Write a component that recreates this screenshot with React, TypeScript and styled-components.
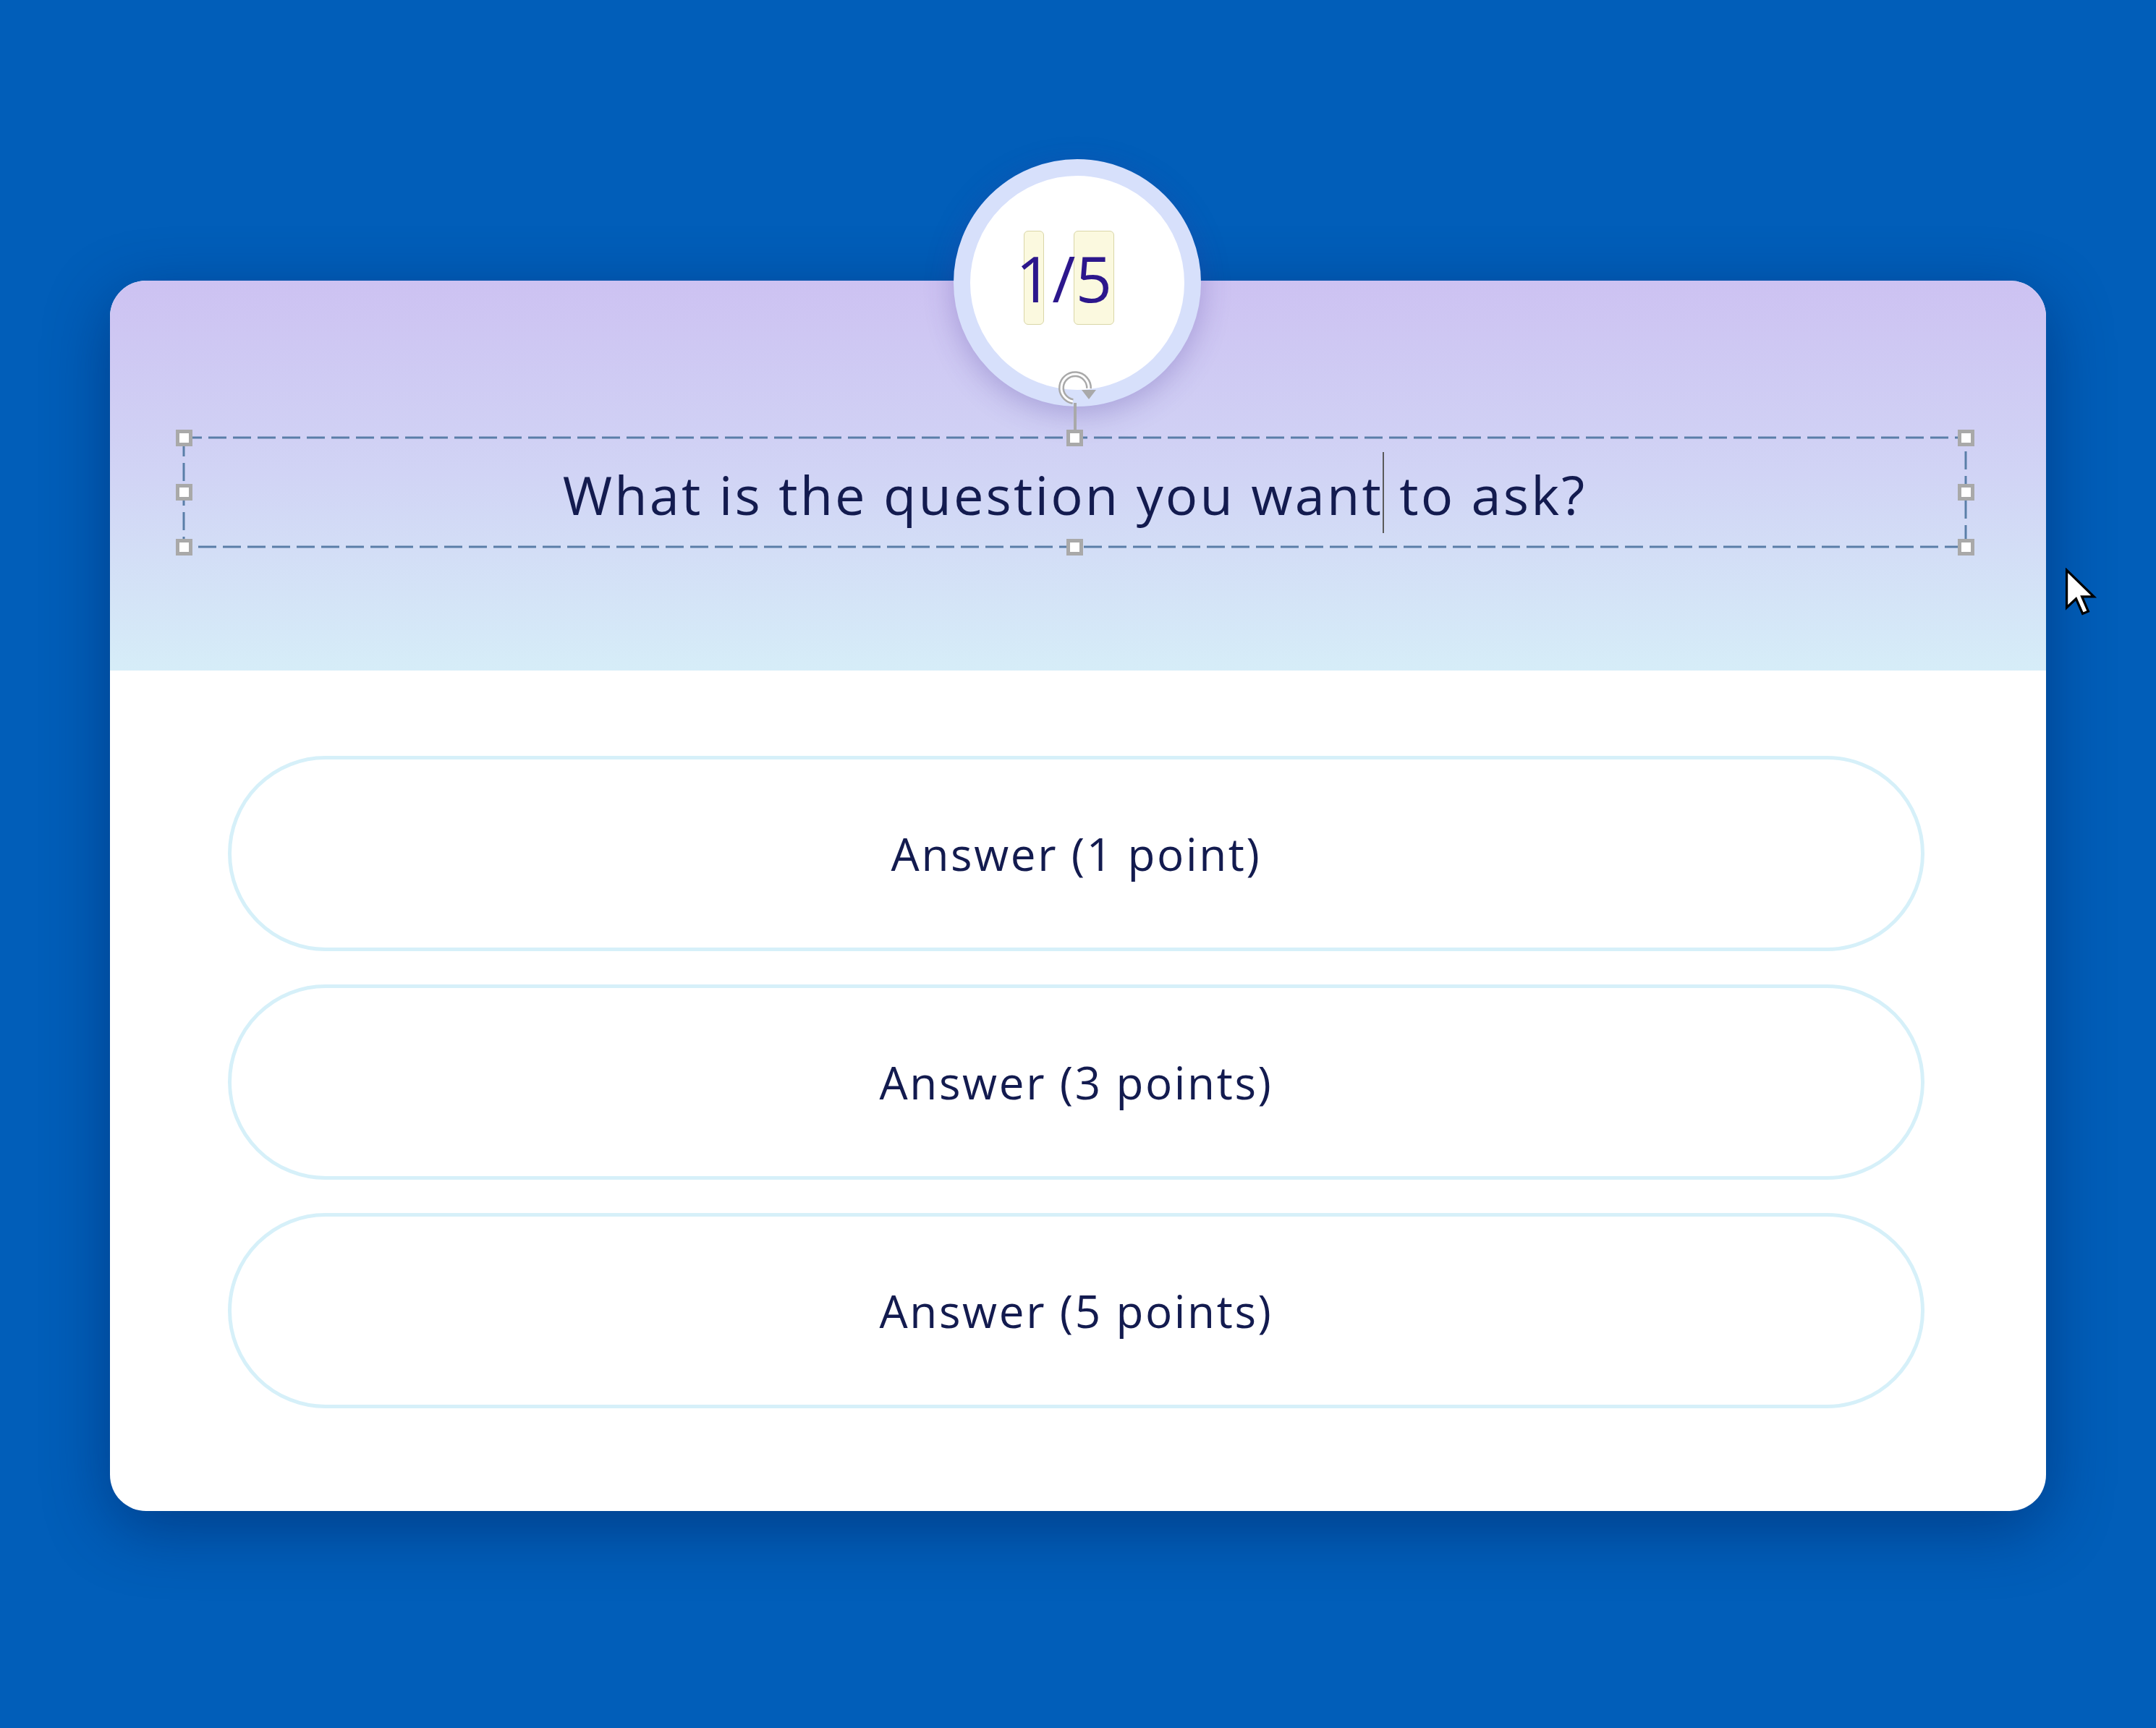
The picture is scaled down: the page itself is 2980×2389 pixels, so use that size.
import React from "react";
import styled, { createGlobalStyle } from "styled-components";

const Global = createGlobalStyle`
  html, body { margin: 0; padding: 0; }
  body {
    width: 2980px;
    height: 2389px;
    overflow: hidden;
    background: #015eb9;
    font-family: "Open Sans", "Noto Sans", sans-serif;
  }
`;

const Page = styled.div`
  position: relative;
  width: 2980px;
  height: 2389px;
  box-sizing: border-box;
  padding: 388px 0 0 152px;
  background: #015eb9;
`;

const Card = styled.div`
  position: relative;
  width: 2676px;
  height: 1701px;
  border-radius: 50px;
  background: #ffffff;
  box-shadow: 0 24px 90px rgba(0, 25, 80, 0.45);
  display: flex;
  flex-direction: column;
`;

const Header = styled.div`
  height: 539px;
  box-sizing: border-box;
  padding: 217px 0 0 102px;
  border-radius: 50px 50px 0 0;
  background: linear-gradient(180deg, #cdc2f2 0%, #d1d4f5 50%, #d6edf8 100%);
  display: flex;
  align-items: flex-start;
`;

const Badge = styled.div`
  position: absolute;
  top: -168px;
  left: 50%;
  margin-left: -172px;
  width: 342px;
  height: 342px;
  box-sizing: border-box;
  border-radius: 50%;
  border: 23px solid #d7e0fb;
  background: #ffffff;
  box-shadow: 0 10px 40px rgba(70, 50, 150, 0.28);
  display: flex;
  align-items: center;
  justify-content: center;
  z-index: 2;
`;

const Counter = styled.div`
  position: relative;
  height: 130px;
  line-height: 130px;
  margin: 0 37px 14px 0;
  font-size: 88px;
  color: #2c178c;
  white-space: nowrap;

  &::before,
  &::after {
    content: "";
    position: absolute;
    top: 0;
    bottom: 0;
    box-sizing: border-box;
    border-radius: 6px;
    background: #fbf9df;
    border: 1.5px solid #d9d6a8;
    z-index: -1;
  }
  &::before {
    left: 11px;
    width: 28px;
  }
  &::after {
    left: 80px;
    width: 56px;
  }
`;

const CounterText = styled.span`
  position: relative;
`;

const SelectionBox = styled.div`
  position: relative;
  width: 2463px;
  height: 151px;
  display: flex;
  align-items: center;
  justify-content: center;
`;

const DashFrame = styled.svg`
  position: absolute;
  inset: 0;
  width: 100%;
  height: 100%;
  overflow: visible;
  pointer-events: none;
`;

const Handle = styled.span<{ $x: number; $y: number }>`
  position: absolute;
  left: ${(p) => p.$x * 100}%;
  top: ${(p) => p.$y * 100}%;
  width: 23px;
  height: 23px;
  margin: -11.5px 0 0 -11.5px;
  box-sizing: border-box;
  background: #ffffff;
  border: 5px solid #a9a9a9;
  z-index: 3;
`;

const Rotator = styled.svg`
  position: absolute;
  left: 50%;
  bottom: 100%;
  width: 60px;
  height: 90px;
  margin-left: -30px;
  z-index: 3;
  overflow: visible;
`;

const Question = styled.div`
  font-size: 74px;
  font-weight: 500;
  letter-spacing: 3.1px;
  line-height: 1;
  color: #131b4f;
  white-space: nowrap;
`;

const Caret = styled.span`
  display: inline-block;
  width: 2px;
  height: 112px;
  margin: 0 -1px;
  vertical-align: -25px;
  background: #5a5a5a;
`;

const Body = styled.div`
  flex: 1;
  padding: 118px 0 0 163px;
  display: flex;
  flex-direction: column;
  gap: 46px;
`;

const AnswerPill = styled.div`
  width: 2345px;
  height: 270px;
  box-sizing: border-box;
  border: 5px solid #d6f0f9;
  border-radius: 135px;
  background: #ffffff;
  display: flex;
  align-items: center;
  justify-content: center;
  font-size: 62px;
  font-weight: 500;
  letter-spacing: 2.6px;
  color: #131b4f;
`;

const Pointer = styled.svg`
  position: absolute;
  left: 2853px;
  top: 785px;
  width: 46px;
  height: 68px;
`;

const handles: Array<[number, number]> = [
  [0, 0], [0.5, 0], [1, 0],
  [0, 0.5], [1, 0.5],
  [0, 1], [0.5, 1], [1, 1],
];

const answers = ["Answer (1 point)", "Answer (3 points)", "Answer (5 points)"];

const arc = "M27 40 A19 19 0 1 1 49 22";

export default function App() {
  return (
    <>
      <Global />
      <Page>
        <Card>
          <Badge>
            <Counter>
              <CounterText>1/5</CounterText>
            </Counter>
          </Badge>
          <Header>
            <SelectionBox>
              <DashFrame>
                <rect
                  x="0"
                  y="0"
                  width="100%"
                  height="100%"
                  fill="none"
                  stroke="#5a7ea8"
                  strokeWidth="3"
                  strokeDasharray="25 9"
                />
              </DashFrame>
              <Rotator viewBox="0 0 60 90">
                <line x1="30" y1="42" x2="30" y2="90" stroke="#a9a9a9" strokeWidth="4" />
                <path d={arc} fill="none" stroke="#a9a9a9" strokeWidth="8" />
                <path d={arc} fill="none" stroke="#ffffff" strokeWidth="3" />
                <path d="M39 24 L59 24 L49 37 Z" fill="#a9a9a9" />
              </Rotator>
              {handles.map(([x, y]) => (
                <Handle key={`${x}-${y}`} $x={x} $y={y} />
              ))}
              <Question>
                What is the question you want<Caret /> to ask?
              </Question>
            </SelectionBox>
          </Header>
          <Body>
            {answers.map((a) => (
              <AnswerPill key={a}>{a}</AnswerPill>
            ))}
          </Body>
        </Card>
        <Pointer viewBox="0 0 14 21">
          <path
            d="M1 1 L1 17 L5 13.2 L7.8 19.6 L10.2 18.6 L7.5 12.3 L12.6 12.3 Z"
            fill="#ffffff"
            stroke="#000000"
            strokeWidth="1"
            strokeLinejoin="miter"
          />
        </Pointer>
      </Page>
    </>
  );
}
